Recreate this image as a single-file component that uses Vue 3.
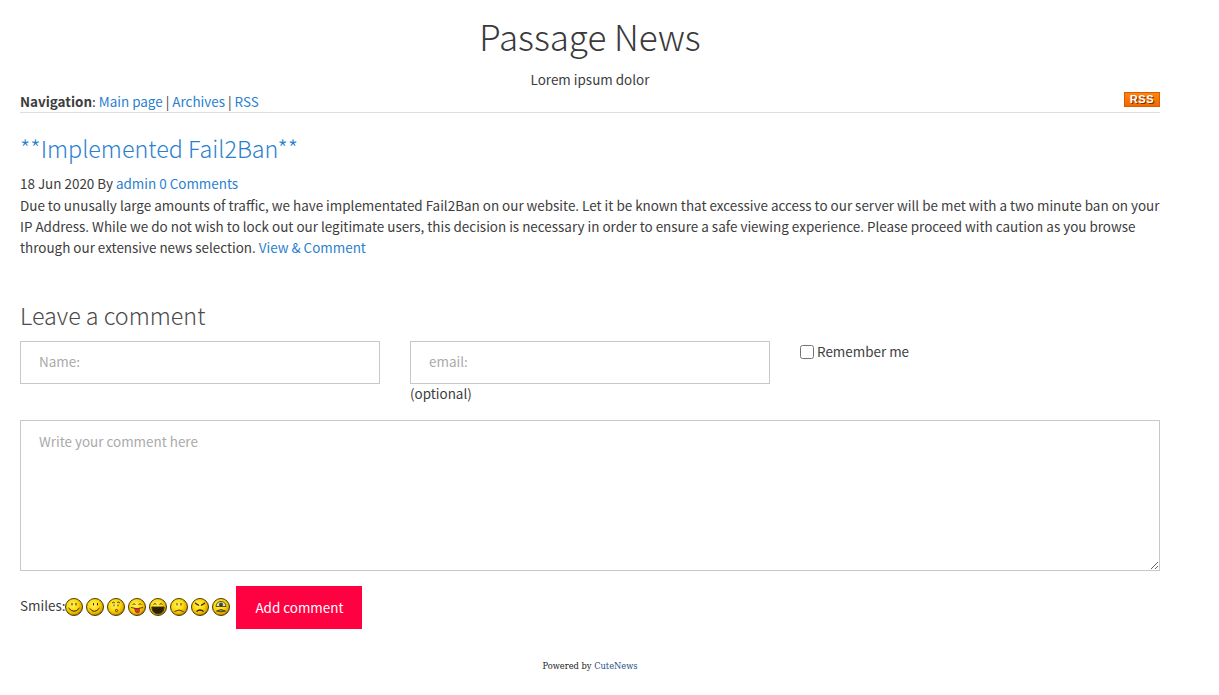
<script setup>
const smiles = ['smile', 'wink', 'think', 'tongue', 'laugh', 'sad', 'angry', 'cry']
</script>

<template>
  <div class="page">
    <header class="masthead">
      <h1>Passage News</h1>
      <p>Lorem ipsum dolor</p>
    </header>
    <nav class="nav">
      <div><b>Navigation</b>: <a href="#">Main page</a> | <a href="#">Archives</a> | <a href="#">RSS</a></div>
      <span class="rss">RSS</span>
    </nav>

    <article class="post">
      <h2><a href="#">**Implemented Fail2Ban**</a></h2>
      <div class="meta">18 Jun 2020 By <a href="#">admin</a> <a href="#">0 Comments</a></div>
      <p>Due to unusally large amounts of traffic, we have implementated Fail2Ban on our website. Let it be known that excessive access to our server will be met with a two minute ban on your IP Address. While we do not wish to lock out our legitimate users, this decision is necessary in order to ensure a safe viewing experience. Please proceed with caution as you browse through our extensive news selection. <a href="#">View &amp; Comment</a></p>
    </article>

    <section class="comment">
      <h3>Leave a comment</h3>
      <div class="fields">
        <div><input type="text" placeholder="Name:" /></div>
        <div><input type="text" placeholder="email:" /><div class="opt">(optional)</div></div>
        <label class="remember"><input type="checkbox" />Remember me</label>
      </div>
      <textarea placeholder="Write your comment here"></textarea>
      <div class="actions">
        <span class="smiles-label">Smiles:</span>
        <span class="smiles">
          <svg v-for="s in smiles" :key="s" class="smile" viewBox="0 0 18 18" width="18" height="18">
            <defs>
              <radialGradient :id="'g-' + s" cx="0.42" cy="0.38" r="0.6">
                <stop offset="0" stop-color="#fff26a" />
                <stop offset="0.55" stop-color="#ffd80a" />
                <stop offset="0.9" stop-color="#e0a800" />
                <stop offset="1" stop-color="#a87c00" />
              </radialGradient>
            </defs>
            <circle cx="9" cy="9" r="8.5" :fill="'url(#g-' + s + ')'" stroke="#4a3c08" stroke-width="1" />
            <g v-if="s === 'smile'" fill="none" stroke="#2e2500" stroke-width="1">
              <path d="M3.5 10Q9 16.5 14.5 10" /><path d="M7 5v2.4M11 5v2.4" />
            </g>
            <g v-else-if="s === 'wink'" fill="none" stroke="#2e2500" stroke-width="1">
              <path d="M4 10.5Q8 16.5 13.5 10" /><path d="M7.5 5v2.4M11.5 5v2.4" />
            </g>
            <g v-else-if="s === 'think'" fill="none" stroke="#3c3000" stroke-width="0.9">
              <path d="M5 5Q6.5 3.5 8 5M10 4.5Q11.5 3.5 13 5" /><path d="M7 6.5v1.8M11 6.5v1.8" />
              <circle cx="9.5" cy="12.5" r="1.1" />
            </g>
            <g v-else-if="s === 'tongue'" fill="none" stroke="#3c3000" stroke-width="0.9">
              <path d="M4.5 6.5Q6 5 7.5 6.5M10.5 6.5Q12 5 13.5 6.5" />
              <path d="M3 9.5Q9 12 15 9.5" />
              <path d="M6.5 10.6Q7 15 9.5 15Q12 15 11.5 10.6Z" fill="#e0303a" stroke="#7a1a10" stroke-width="0.5" />
            </g>
            <g v-else-if="s === 'laugh'" fill="none" stroke="#3c3000" stroke-width="0.9">
              <path d="M4.5 6.5Q6 4.5 7.5 6.5M10.5 6.5Q12 4.5 13.5 6.5" />
              <path d="M2.8 9H15.2Q14.8 15.8 9 15.8Q3.2 15.8 2.8 9Z" fill="#2b2100" />
            </g>
            <g v-else-if="s === 'sad'" fill="none" stroke="#3c3000" stroke-width="0.9">
              <path d="M7 5v2.5M11 5v2.5" /><path d="M4.5 13.5Q9 10.5 13.5 13.5" />
            </g>
            <g v-else-if="s === 'angry'" fill="none" stroke="#2b2100" stroke-width="1.3">
              <path d="M4 5L8 7.5M14 5L10 7.5" /><path d="M5.5 13.5Q9 10.5 12.5 13.5" />
            </g>
            <g v-else fill="none" stroke="#3c3000" stroke-width="0.8">
              <path d="M4 8.5Q4.5 3.5 9 3.5Q13.5 3.5 14 8.5Z" fill="#d8e6c8" />
              <circle cx="9" cy="6.6" r="1.6" fill="#3b4a30" />
              <path d="M4.5 13Q9 10 13.5 13Q9 14.8 4.5 13Z" fill="#8a9a70" />
            </g>
          </svg>
        </span>
        <button type="button">Add comment</button>
      </div>
    </section>

    <footer class="foot">Powered by <a href="#">CuteNews</a></footer>
  </div>
</template>

<style scoped>
.page {
  width: 1140px;
  margin-left: 20px;
  font-family: "Noto Sans CJK JP", "Noto Sans", sans-serif;
  font-size: 13.45px;
  line-height: 21px;
  color: #3d3d3d;
}
a {
  color: #2a7fd0;
  text-decoration: none;
}
.masthead {
  text-align: center;
}
h1 {
  margin: 0;
  padding-top: 10px;
  font-size: 35px;
  line-height: 52px;
  font-weight: 300;
  color: #3a3a3a;
}
.masthead p {
  margin: 7px 0 0;
}
.nav {
  display: flex;
  justify-content: space-between;
  margin-top: 1px;
  height: 22px;
  border-bottom: 1px solid #ddd;
  box-sizing: border-box;
}
.nav b {
  font-weight: 700;
}
.rss {
  box-sizing: border-box;
  width: 36px;
  height: 15px;
  margin-top: 1px;
  background: linear-gradient(#ff8412, #f26800);
  border: 1px solid #d65c00;
  color: #fff;
  font: 700 11px/13px "Liberation Sans", sans-serif;
  letter-spacing: 0.6px;
  text-align: center;
  text-shadow: 1px 1px 0 #7a3000;
}
.post {
  margin-top: 17px;
}
h2 {
  margin: 0;
  font-size: 23.3px;
  line-height: 36px;
  font-weight: 300;
}
.meta {
  margin-top: 7px;
}
.post p {
  margin: 1px 0 0;
}
.comment {
  margin-top: 39px;
}
h3 {
  margin: 0;
  font-size: 23.3px;
  line-height: 36px;
  font-weight: 300;
  color: #4a4a4a;
}
.fields {
  display: grid;
  grid-template-columns: 360px 360px 360px;
  gap: 30px;
  margin-top: 8px;
}
input[type="text"] {
  display: block;
  box-sizing: border-box;
  width: 100%;
  height: 43px;
  padding: 0 18px 4px;
  border: 1px solid #c8c8c8;
  font: inherit;
  color: #444;
  outline: none;
}
textarea {
  display: block;
  box-sizing: border-box;
  width: 1140px;
  height: 151px;
  margin-top: 16px;
  padding: 10px 18px;
  border: 1px solid #c8c8c8;
  font: inherit;
  color: #444;
  outline: none;
}
input::placeholder,
textarea::placeholder {
  color: #aaa;
  opacity: 1;
}
.opt {
  margin-top: -1px;
  height: 21px;
}
.remember {
  display: flex;
  align-items: center;
  height: 21px;
}
.remember input {
  width: 14px;
  height: 14px;
  margin: 0 3px 0 0;
}
.actions {
  display: flex;
  align-items: flex-start;
  margin-top: 15px;
}
.smiles-label {
  margin-top: 9px;
}
.smiles {
  display: flex;
  gap: 3px;
  margin-top: 12px;
}
.smile {
  display: block;
}
button {
  width: 126px;
  height: 43px;
  margin-left: 6px;
  border: 0;
  background: #ff0040;
  color: #fff;
  font: inherit;
}
.foot {
  margin-top: 27px;
  text-align: center;
  font-family: "DejaVu Serif", serif;
  font-size: 8.3px;
  line-height: 20px;
  color: #222;
}
.foot a {
  color: #1f4f86;
}
</style>

<style>
body {
  background: #fff;
}
</style>
